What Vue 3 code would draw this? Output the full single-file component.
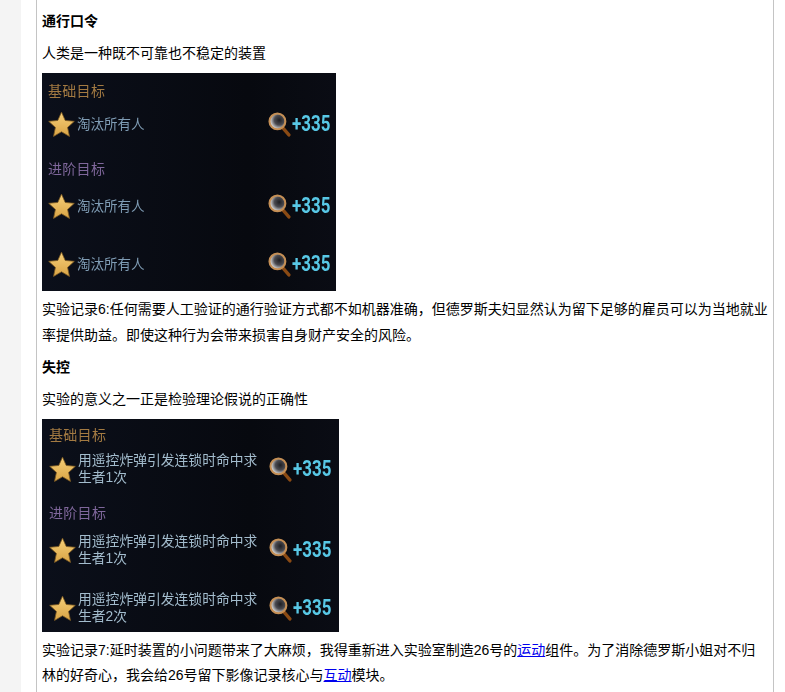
<script setup>
const star = "M12 1 15.3 8.4 23.4 9.2 17.4 14.6 19.1 22.6 12 18.5 4.9 22.6 6.6 14.6 .6 9.2 8.7 8.4Z";
const first = [
  { head: '基础目标', cls: 'gold', text: ['淘汰所有人'] },
  { head: '进阶目标', cls: 'violet', text: ['淘汰所有人'] },
  { text: ['淘汰所有人'] },
];
const second = [
  { head: '基础目标', cls: 'gold', text: ['用遥控炸弹引发连锁时命中求', '生者1次'] },
  { head: '进阶目标', cls: 'violet', text: ['用遥控炸弹引发连锁时命中求', '生者1次'] },
  { text: ['用遥控炸弹引发连锁时命中求', '生者2次'] },
];
</script>

<template>
  <div class="page">
    <div class="rail"></div>
    <main class="article">
      <p class="title">通行口令</p>
      <p>人类是一种既不可靠也不稳定的装置</p>
      <div class="shot shot-a">
        <div v-for="(r, i) in first" :key="i" class="block">
          <div v-if="r.head" class="head" :class="r.cls">{{ r.head }}</div>
          <div class="row">
            <svg class="star" viewBox="0 0 24 24"><defs><linearGradient id="sg" x1="0" y1="0" x2="0" y2="1"><stop offset="0" stop-color="#f6cf78"/><stop offset="1" stop-color="#d9a445"/></linearGradient></defs><path :d="star" fill="url(#sg)" stroke="#7d5a22" stroke-width=".7"/></svg>
            <div class="task"><div v-for="t in r.text" :key="t">{{ t }}</div></div>
            <svg class="glass" viewBox="0 0 24 24"><defs><radialGradient id="gg" cx=".62" cy=".42" r=".62"><stop offset="0" stop-color="#1e1e22"/><stop offset=".5" stop-color="#4a4a50"/><stop offset="1" stop-color="#f0f0f0"/></radialGradient></defs><path d="M15 15 21 22" stroke="#8a4a14" stroke-width="3.2" stroke-linecap="round"/><circle cx="10" cy="9" r="7.6" fill="url(#gg)" stroke="#c58f55" stroke-width="2"/></svg>
            <span class="score"><span class="digits">+335</span></span>
          </div>
        </div>
      </div>
      <p class="after">实验记录6:任何需要人工验证的通行验证方式都不如机器准确，但德罗斯夫妇显然认为留下足够的雇员可以为当地就业率提供助益。即使这种行为会带来损害自身财产安全的风险。</p>
      <p class="title">失控</p>
      <p>实验的意义之一正是检验理论假说的正确性</p>
      <div class="shot shot-b">
        <div v-for="(r, i) in second" :key="i" class="block">
          <div v-if="r.head" class="head" :class="r.cls">{{ r.head }}</div>
          <div class="row">
            <svg class="star" viewBox="0 0 24 24"><path :d="star" fill="url(#sg)" stroke="#7d5a22" stroke-width=".7"/></svg>
            <div class="task"><div v-for="t in r.text" :key="t">{{ t }}</div></div>
            <svg class="glass" viewBox="0 0 24 24"><path d="M15 15 21 22" stroke="#8a4a14" stroke-width="3.2" stroke-linecap="round"/><circle cx="10" cy="9" r="7.6" fill="url(#gg)" stroke="#c58f55" stroke-width="2"/></svg>
            <span class="score"><span class="digits">+335</span></span>
          </div>
        </div>
      </div>
      <p class="after">实验记录7:延时装置的小问题带来了大麻烦，我得重新进入实验室制造26号的<a href="#">运动</a>组件。为了消除德罗斯小姐对不归林的好奇心，我会给26号留下影像记录核心与<a href="#">互动</a>模块。</p>
    </main>
  </div>
</template>

<style>
html, body { margin: 0; background: #fff; overflow: hidden; }
</style>

<style scoped>
.page { display: flex; height: 692px; overflow: hidden; background: #fff; font: 14px/25.2px "Liberation Sans", "Noto Sans CJK SC", sans-serif; color: #000; }
.rail { width: 21px; flex: none; background: #f4f4f4; }
.article { width: 727px; margin-left: 15px; padding: 0 4px 0 5px; border: solid #c4c4c4; border-width: 0 1px; box-sizing: content-box; flex: none; }
p { margin: 0 0 7px; }
.title { font-weight: 700; padding-top: 9px; }
.article > .title ~ .title { padding-top: 0; }
a { color: #00e; }
.shot { background: linear-gradient(90deg, #0b0f1a, #07090f 70%, #0a0c14); margin-bottom: 6px; color: #7f9cb4; box-sizing: border-box; overflow: hidden; }
.shot > .block { filter: blur(.35px); }
.shot-a { width: 294px; height: 218px; padding: 8px 5px 0 6px; }
.shot-b { width: 297px; height: 213px; padding: 6px 7px 0 7px; color: #a3bccd; }
.head { font-size: 14px; line-height: 20px; letter-spacing: .3px; }
.gold { color: #a37a42; }
.violet { color: #7f679b; }
.row { display: flex; align-items: center; height: 40px; }
.block:nth-child(1) .row { margin-top: 3px; }
.block:nth-child(2) .head { margin-top: 15px; }
.block:nth-child(2) .row { margin-top: 7px; }
.block:nth-child(3) .row { margin-top: 18px; }
.shot-b .block:nth-child(1) .row { margin-top: 4px; }
.shot-b .block:nth-child(2) .head { margin-top: 14px; }
.star { width: 27px; height: 27px; flex: none; }
.task { flex: 1; min-width: 0; font-size: 13.5px; line-height: 17px; margin-left: 2px; white-space: nowrap; }
.shot-b .task { font-size: 13.8px; }
.glass { width: 25px; height: 25px; flex: none; }
.score { color: #58c8e6; width: 39px; flex: none; padding-top: 3px; }
.digits { display: inline-block; font: 700 22px/24px Roboto, sans-serif; transform: scaleX(.77); transform-origin: left center; }
</style>
